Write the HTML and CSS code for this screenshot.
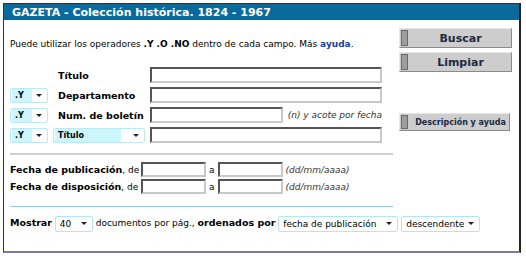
FILE: index.html
```html
<!DOCTYPE html>
<html lang="es">
<head>
    <meta charset="UTF-8">
    <title>Gazeta - Colección histórica</title>
    <link rel="stylesheet" href="styles.css">
</head>
<body>
    <div class="frame">
        <div class="header">GAZETA - Colección histórica. 1824 - 1967</div>

        <div class="content">
            <div class="main">
                <p class="intro">Puede utilizar los operadores <b>.Y .O .NO</b> dentro de cada campo. Más <a href="#">ayuda</a>.</p>

                <!-- Campos de búsqueda -->
                <div class="fields">
                    <span></span>
                    <label class="lbl">Título</label>
                    <input type="text" class="txt wide">

                    <div class="sel op"><span class="val">.Y</span><span class="arrow"></span></div>
                    <label class="lbl">Departamento</label>
                    <input type="text" class="txt wide">

                    <div class="sel op"><span class="val">.Y</span><span class="arrow"></span></div>
                    <label class="lbl">Num. de boletín</label>
                    <div class="inline">
                        <input type="text" class="txt mid">
                        <i>(n) y acote por fecha</i>
                    </div>

                    <div class="sel op"><span class="val">.Y</span><span class="arrow"></span></div>
                    <div class="sel field"><span class="val">Título</span><span class="arrow"></span></div>
                    <input type="text" class="txt wide">
                </div>

                <hr class="sep gray">

                <!-- Fechas -->
                <div class="dates">
                    <div class="date-row">
                        <span class="dlabel"><b>Fecha de publicación</b>, de</span>
                        <input type="text" class="txt date">
                        a
                        <input type="text" class="txt date">
                        <i>(dd/mm/aaaa)</i>
                    </div>
                    <div class="date-row">
                        <span class="dlabel"><b>Fecha de disposición</b>, de</span>
                        <input type="text" class="txt date">
                        a
                        <input type="text" class="txt date">
                        <i>(dd/mm/aaaa)</i>
                    </div>
                </div>

                <hr class="sep teal">

                <div class="show">
                    <b>Mostrar</b>
                    <div class="sel plain num"><span class="val">40</span><span class="arrow"></span></div>
                    documentos por pág., <b>ordenados por</b>
                    <div class="sel plain order"><span class="val">fecha de publicación</span><span class="arrow"></span></div>
                    <div class="sel plain dir"><span class="val">descendente</span><span class="arrow"></span></div>
                </div>
            </div>

            <div class="side">
                <button class="btn">Buscar</button>
                <button class="btn">Limpiar</button>
                <button class="btn small">Descripción y ayuda</button>
            </div>
        </div>
    </div>
</body>
</html>
```

FILE: styles.css
```css
* {
    margin: 0;
    padding: 0;
    box-sizing: border-box;
}

body {
    background: #fff;
    font-family: 'DejaVu Sans', Verdana, sans-serif;
    font-size: 9px;
    color: #000;
}

.frame {
    margin: 3px 0 0 3px;
    width: 518px;
    height: 250px;
    border-left: 1px solid #333;
    border-right: 2px solid #222;
    border-bottom: 2px solid #7a7aa6;
}

.header {
    background: #0b6a9c;
    color: #fff;
    font-weight: bold;
    font-size: 11px;
    height: 17px;
    line-height: 17px;
    padding-left: 8px;
    border-top: 1px solid #1f3550;
}

.content {
    display: flex;
    padding: 0 0 0 6px;
}

.main {
    width: 387px;
}

.intro {
    margin-top: 18px;
    line-height: 12px;
}

.intro a {
    color: #1a3f9a;
    font-weight: bold;
    text-decoration: none;
}

/* Campos */
.fields {
    display: grid;
    grid-template-columns: 38px 92px 232px;
    column-gap: 5px;
    row-gap: 4px;
    align-items: center;
    margin-top: 17px;
}

.lbl {
    font-weight: bold;
    padding-left: 5px;
    font-size: 9.5px;
}

.txt {
    height: 16px;
    border: 2px solid;
    border-color: #555 #c8c8c8 #c8c8c8 #555;
    background: #fff;
    font-size: 9px;
}

.wide {
    width: 232px;
}

.mid {
    width: 135px;
}

.date {
    width: 65px;
    height: 15px;
}

.inline {
    display: flex;
    align-items: center;
    gap: 5px;
    white-space: nowrap;
}

i {
    color: #333;
}

.sel {
    display: flex;
    align-items: center;
    height: 15px;
    border: 1px solid #bfe9f2;
    border-radius: 2px;
    background: #fff;
    font-size: 8px;
    font-weight: bold;
}

.sel .val {
    flex: 1;
    height: 100%;
    line-height: 13px;
    padding-left: 3px;
    background: #ccf6fb;
    margin: 0 4px 0 1px;
}

.sel .arrow {
    width: 0;
    height: 0;
    border-left: 3px solid transparent;
    border-right: 3px solid transparent;
    border-top: 3px solid #222;
    margin-right: 5px;
}

.field .val {
    margin-right: 12px;
}

.plain {
    display: inline-flex;
    vertical-align: middle;
    font-weight: normal;
    font-size: 9px;
    height: 16px;
    border-color: #b5e6ef;
}

.plain .val {
    background: none;
    line-height: 14px;
    white-space: nowrap;
}

.num {
    width: 38px;
}

.order {
    width: 120px;
}

.dir {
    width: 79px;
}

.sep {
    border: none;
    width: 383px;
    height: 2px;
    margin-top: 10px;
}

.sep.gray {
    background: #cfcfcf;
}

.sep.teal {
    height: 1px;
    margin-top: 12px;
    background: #8fd3d3;
}

.dates {
    margin-top: 7px;
    display: flex;
    flex-direction: column;
    gap: 2px;
}

.date-row {
    display: flex;
    align-items: center;
    gap: 3px;
    white-space: nowrap;
}

.dlabel {
    width: 128px;
}

.dlabel b {
    font-size: 9.5px;
}

.show {
    margin-top: 8px;
    line-height: 16px;
    white-space: nowrap;
}

.show b {
    font-size: 9.5px;
}

/* Botones */
.side {
    display: flex;
    flex-direction: column;
    margin: 8px 0 0 2px;
    gap: 4px;
}

.btn {
    position: relative;
    width: 113px;
    height: 20px;
    background: #cdcdcd;
    border: 1px solid;
    border-color: #e6e6e6 #8a8a8a #8a8a8a #e6e6e6;
    font-family: 'DejaVu Sans', Verdana, sans-serif;
    font-weight: bold;
    font-size: 11px;
    color: #1a2a40;
    padding-left: 10px;
}

.btn::before {
    content: '';
    position: absolute;
    left: 1px;
    top: 1px;
    bottom: 1px;
    width: 5px;
    background: #9d9d9d;
    border: 1px solid #6a6a6a;
}

.btn.small {
    margin-top: 37px;
    width: 111px;
    height: 18px;
    font-size: 8px;
    padding-left: 12px;
}
```
